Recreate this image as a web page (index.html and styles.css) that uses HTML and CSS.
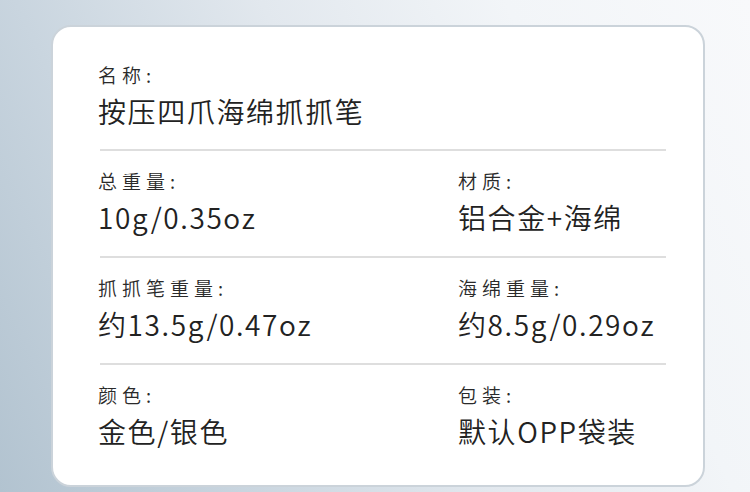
FILE: index.html
```html
<!DOCTYPE html>
<html lang="zh-CN">
<head>
<meta charset="utf-8">
<link rel="stylesheet" href="styles.css">
</head>
<body>
<div class="page">
  <div class="card">
    <div class="row">
      <div class="cell">
        <div class="label">名称:</div>
        <div class="value">按压四爪海绵抓抓笔</div>
      </div>
    </div>
    <div class="row">
      <div class="cell">
        <div class="label">总重量:</div>
        <div class="value">10g/0.35oz</div>
      </div>
      <div class="cell">
        <div class="label">材质:</div>
        <div class="value">铝合金+海绵</div>
      </div>
    </div>
    <div class="row">
      <div class="cell">
        <div class="label">抓抓笔重量:</div>
        <div class="value">约13.5g/0.47oz</div>
      </div>
      <div class="cell">
        <div class="label">海绵重量:</div>
        <div class="value">约8.5g/0.29oz</div>
      </div>
    </div>
    <div class="row last">
      <div class="cell">
        <div class="label">颜色:</div>
        <div class="value">金色/银色</div>
      </div>
      <div class="cell">
        <div class="label">包装:</div>
        <div class="value">默认OPP袋装</div>
      </div>
    </div>
  </div>
</div>
</body>
</html>
```
FILE: styles.css
```css
* { box-sizing: border-box; }
html, body {
  margin: 0;
  padding: 0;
  width: 750px;
  height: 492px;
  overflow: hidden;
}
body {
  font-family: "Noto Sans CJK SC", "Noto Sans", sans-serif;
  color: #2f2f2f;
}
.page {
  width: 750px;
  height: 492px;
  padding: 25px 0 0 51px;
  background: linear-gradient(65deg, #b2c3d0 0%, #c9d5df 25%, #e2e8ee 50%, #f2f5f8 75%, #f8f9fb 100%);
}
.card {
  width: 654px;
  height: 462px;
  background: #ffffff;
  border: 2px solid #cbd3da;
  border-radius: 20px;
  padding: 36px 37px 0 45px;
  display: flex;
  flex-direction: column;
}
.row {
  display: grid;
  grid-template-columns: 360px 1fr;
  padding: 18px 0 21px 0;
  border-bottom: 2px solid #dedede;
  margin-left: 2px;
}
.row:first-child { padding-top: 0; padding-bottom: 20px; }
.row.last { border-bottom: none; }
.cell { margin-left: -2px; }
.label {
  font-size: 19px;
  line-height: 24px;
  letter-spacing: 5px;
  font-weight: 350;
  color: #2a2a2a;
}
.value {
  margin-top: 6px;
  font-size: 28px;
  line-height: 36px;
  letter-spacing: 1.6px;
  font-weight: 350;
  color: #222222;
}
```
